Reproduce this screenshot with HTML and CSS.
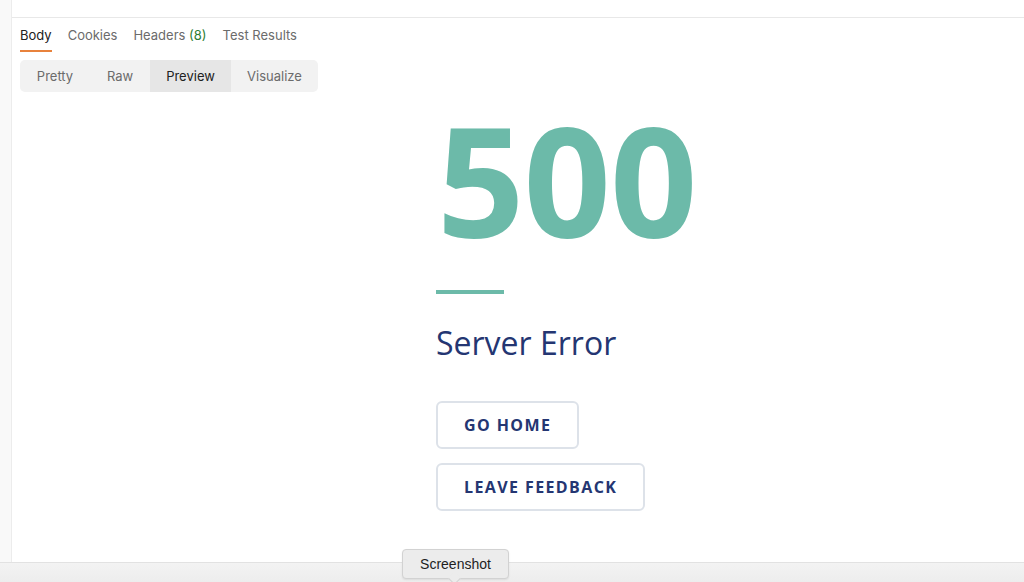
FILE: index.html
```html
<!DOCTYPE html>
<html>
<head>
<meta charset="utf-8">
<link rel="stylesheet" href="styles.css">
</head>
<body>
<div class="app">
  <aside class="rail"></aside>
  <main class="pane">
    <div class="topstrip"></div>
    <nav class="tabs">
      <span class="tab active">Body</span>
      <span class="tab">Cookies</span>
      <span class="tab">Headers <span class="count">(8)</span></span>
      <span class="tab">Test Results</span>
    </nav>
    <div class="seg">
      <span class="seg-item">Pretty</span>
      <span class="seg-item">Raw</span>
      <span class="seg-item selected">Preview</span>
      <span class="seg-item">Visualize</span>
    </div>
    <section class="preview">
      <div class="error">
        <div class="code">500</div>
        <div class="rule"></div>
        <h1 class="title">Server Error</h1>
        <div class="actions">
          <a class="btn">GO HOME</a>
          <a class="btn">LEAVE FEEDBACK</a>
        </div>
      </div>
    </section>
  </main>
</div>
<footer class="statusbar">
  <div class="tooltip">Screenshot</div>
</footer>
</body>
</html>
```

FILE: styles.css
```css
* { box-sizing: border-box; }
html, body { margin: 0; padding: 0; }
body {
  width: 1024px;
  height: 582px;
  overflow: hidden;
  background: #fff;
  font-family: Inter, "Liberation Sans", sans-serif;
  display: flex;
  flex-direction: column;
}
.app {
  flex: 1;
  display: flex;
  min-height: 0;
}
.rail {
  width: 12px;
  background: #f9f9f9;
  border-right: 1px solid #ececec;
}
.pane {
  flex: 1;
  display: flex;
  flex-direction: column;
}
.topstrip {
  height: 18px;
  border-bottom: 1px solid #e8e8e8;
}
.tabs {
  display: flex;
  gap: 16px;
  padding: 9px 0 0 8px;
  height: 34px;
  align-items: flex-start;
}
.tab {
  font-size: 13px;
  color: #6b6b6b;
  line-height: 16px;
  padding-bottom: 7px;
  border-bottom: 2px solid transparent;
}
.tab.active {
  color: #212121;
  border-bottom-color: #e8823c;
}
.count { color: #2e7d32; }
.seg {
  margin-left: 8px;
  margin-top: 8px;
  width: 298px;
  height: 32px;
  background: #f2f2f2;
  border-radius: 5px;
  display: flex;
  overflow: hidden;
}
.seg-item {
  font-size: 13px;
  color: #6b6b6b;
  display: flex;
  align-items: center;
  justify-content: center;
}
.seg-item:nth-child(1) { width: 70px; }
.seg-item:nth-child(2) { width: 60px; }
.seg-item:nth-child(3) { width: 81px; }
.seg-item:nth-child(4) { width: 87px; }
.seg-item.selected {
  background: #e6e6e6;
  color: #212121;
}
.preview {
  flex: 1;
  padding-left: 424px;
}
.error {
  display: flex;
  flex-direction: column;
  align-items: flex-start;
  font-family: "Open Sans", sans-serif;
}
.code {
  font-size: 153px;
  font-weight: 700;
  color: #6cbaa9;
  line-height: 1;
  margin-top: 10px;
  margin-left: 1px;
  letter-spacing: -1px;
}
.rule {
  width: 68px;
  height: 4px;
  background: #6cbaa9;
  margin-top: 35px;
}
.title {
  margin: 29px 0 0 0;
  font-size: 32px;
  font-weight: 400;
  color: #243672;
  line-height: 40px;
  white-space: nowrap;
}
.actions {
  margin-top: 38px;
  display: flex;
  flex-direction: column;
  align-items: flex-start;
  gap: 14px;
}
.btn {
  display: block;
  height: 48px;
  padding: 0 26px;
  border: 2px solid #dde2e9;
  border-radius: 6px;
  font-size: 16px;
  font-weight: 700;
  letter-spacing: 1.4px;
  color: #243672;
  line-height: 44px;
  white-space: nowrap;
}
.statusbar {
  height: 20px;
  background: linear-gradient(#f3f3f3, #ededed);
  border-top: 1px solid #e2e2e2;
  position: relative;
}
.tooltip {
  position: absolute;
  left: 402px;
  top: -14px;
  width: 107px;
  height: 30px;
  background: #ececec;
  border: 1px solid #d2d2d2;
  border-radius: 4px;
  box-shadow: 0 1px 2px rgba(0,0,0,0.08);
  font-family: "Liberation Sans", Arial, sans-serif;
  font-size: 14px;
  color: #1e1e1e;
  display: flex;
  align-items: center;
  justify-content: center;
}
.tooltip::after {
  content: "";
  position: absolute;
  left: 47px;
  bottom: -5px;
  width: 8px;
  height: 8px;
  background: #ececec;
  border-right: 1px solid #d2d2d2;
  border-bottom: 1px solid #d2d2d2;
  transform: rotate(45deg);
}
```
